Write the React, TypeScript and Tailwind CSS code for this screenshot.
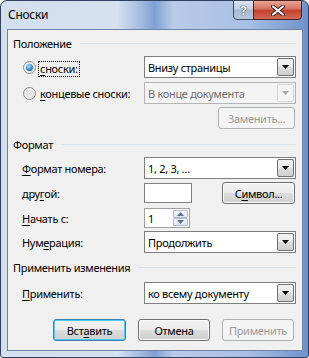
import React from "react";

const FONT = { fontFamily: '"Noto Sans", "Open Sans", sans-serif' };

function M({ children }: { children: React.ReactNode }) {
  return <span className="underline underline-offset-[2px] decoration-[1px]">{children}</span>;
}

function Arrow({ color = "#000" }: { color?: string }) {
  return (
    <svg width="7" height="4" viewBox="0 0 7 4">
      <path d="M0 0h7L3.5 4z" fill={color} />
    </svg>
  );
}

function Combo({ text, disabled }: { text: string; disabled?: boolean }) {
  return (
    <div
      className={
        "w-[152px] h-[22px] flex items-stretch p-[1px] border " +
        (disabled ? "border-[#b5b5b5] bg-[#f4f4f4]" : "border-[#7f7f7f] bg-white")
      }
    >
      <div
        className={
          "flex-1 flex items-center pl-[2px] text-[11px] leading-[15px] " +
          (disabled ? "text-[#6d6d6d]" : "text-black")
        }
      >
        {text}
      </div>
      <div
        className={
          "w-[17px] flex items-center justify-center rounded-[2px] border " +
          (disabled
            ? "border-[#d6d6d6] bg-[#f4f4f4]"
            : "border-[#707070] bg-[linear-gradient(#f2f2f2_0%,#ebebeb_50%,#dddddd_50%,#cfcfcf_100%)]")
        }
      >
        <Arrow color={disabled ? "#a9a9a9" : "#000"} />
      </div>
    </div>
  );
}

function Btn({
  children,
  w,
  disabled,
  def,
}: {
  children: React.ReactNode;
  w: string;
  disabled?: boolean;
  def?: boolean;
}) {
  let cls = "";
  if (disabled) cls = "border-[#adb2b5] bg-[#f4f4f4] text-[#9a9a9a]";
  else if (def)
    cls =
      "border-[#3c7fb1] shadow-[inset_0_0_0_1px_#4fc8f3] bg-[linear-gradient(#f2f2f2_0%,#ebebeb_50%,#dddddd_50%,#cfcfcf_100%)] text-black";
  else
    cls =
      "border-[#707070] shadow-[inset_0_0_0_1px_#fbfbfb] bg-[linear-gradient(#f2f2f2_0%,#ebebeb_50%,#dddddd_50%,#cfcfcf_100%)] text-black";
  return (
    <div
      className={
        "h-[22px] flex items-center justify-center rounded-[3px] border text-[11px] leading-[15px] " +
        w +
        " " +
        cls
      }
    >
      {children}
    </div>
  );
}

function Header({ children, mt }: { children: React.ReactNode; mt: string }) {
  return (
    <div className={"flex items-center pl-[5px] pr-[6px] h-[15px] " + mt}>
      <span className="text-[11px] leading-[15px] text-black whitespace-nowrap">{children}</span>
      <div className="flex-1 h-[1px] bg-[#dbe3e8] ml-[8px]" />
    </div>
  );
}

function Row({
  label,
  children,
  mt,
}: {
  label: React.ReactNode;
  children: React.ReactNode;
  mt: string;
}) {
  return (
    <div className={"flex items-center pl-[14px] pr-[6px] " + mt}>
      <div className="flex-1 text-[11px] leading-[15px] text-black">{label}</div>
      {children}
    </div>
  );
}

function Radio({ checked }: { checked?: boolean }) {
  return (
    <span className="w-[13px] h-[13px] rounded-full border border-[#8c8c8c] bg-[radial-gradient(circle_at_50%_50%,#dcdcdc,#f8f8f8)] flex items-center justify-center">
      {checked && (
        <span className="w-[7px] h-[7px] rounded-full bg-[radial-gradient(circle_at_40%_35%,#b8ecff_0%,#2a86c8_55%,#0b4b85_100%)]" />
      )}
    </span>
  );
}

export default function App() {
  return (
    <div style={FONT} className="w-[309px] h-[358px] overflow-hidden tracking-[-0.3px]">
      <div className="relative w-[309px] h-[358px] rounded-t-[7px] rounded-b-[3px] border border-[#2f4260] bg-[linear-gradient(90deg,#d3dfee_0%,#d6e1f0_38%,#9fb8de_46%,#7fa0d4_50%,#b8cbe7_56%,#a9c0e4_80%,#6f92cb_100%)] flex flex-col">
        {/* title bar */}
        <div className="h-[28px] flex items-center pl-[7px] pb-[1px]">
          <span className="text-[12px] leading-[15px] text-black">Сноски</span>
        </div>
        {/* caption buttons */}
        <div className="absolute top-[-1px] left-[232px] flex">
          <div className="w-[21px] h-[20px] rounded-bl-[4px] border border-[#3d4d66] bg-[linear-gradient(#d9e2ee_0%,#c3d0e3_45%,#a7b8d2_50%,#b9c9df_100%)] flex items-center justify-center">
            <span className="text-[13px] font-bold leading-[13px] text-white [text-shadow:0_0_1px_#1c2a40,0_0_1px_#1c2a40]">
              ?
            </span>
          </div>
          <div className="w-[49px] h-[20px] -ml-[1px] rounded-br-[4px] border border-[#4a2323] bg-[linear-gradient(#e8a596_0%,#d6725f_45%,#c2402d_50%,#d26a55_100%)] flex items-center justify-center">
            <svg width="14" height="11" viewBox="0 0 14 11">
              <path d="M2 1.5L12 9.5M12 1.5L2 9.5" stroke="#3b1a1a" strokeWidth="4" strokeLinecap="round" />
              <path d="M2 1.5L12 9.5M12 1.5L2 9.5" stroke="#ffffff" strokeWidth="2.2" strokeLinecap="round" />
            </svg>
          </div>
        </div>
        {/* content panel */}
        <div className="ml-[6px] w-[296px] h-[322px] border border-[#6f84a4] bg-[#f0f0f0] flex flex-col">
          <Header mt="mt-[6px]">Положение</Header>

          <div className="flex items-center pl-[15px] pr-[6px] mt-[5px] h-[22px]">
            <Radio checked />
            <div className="flex-1 ml-[2px]">
              <span className="inline-block border border-dotted border-black px-[1px] text-[11px] leading-[14px] text-black">
                <M>с</M>носки:
              </span>
            </div>
            <Combo text="Внизу страницы" />
          </div>

          <div className="flex items-center pl-[15px] pr-[6px] mt-[4px] h-[22px]">
            <Radio />
            <div className="flex-1 ml-[4px] text-[11px] leading-[15px] text-black">
              <M>к</M>онцевые сноски:
            </div>
            <Combo text="В конце документа" disabled />
          </div>

          <div className="flex justify-end pr-[7px] mt-[3px]">
            <Btn w="w-[77px]" disabled>
              Заменить...
            </Btn>
          </div>

          <Header mt="mt-[8px]">Формат</Header>

          <Row
            mt="mt-[5px]"
            label={
              <>
                <M>Ф</M>ормат номера:
              </>
            }
          >
            <Combo text="1, 2, 3, …" />
          </Row>

          <Row
            mt="mt-[3px]"
            label={
              <>
                дру<M>г</M>ой:
              </>
            }
          >
            <div className="w-[152px] flex items-center justify-between">
              <div className="w-[48px] h-[20px] border border-[#838383] bg-white" />
              <Btn w="w-[73px] mr-[1px]">
                С<M>и</M>мвол...
              </Btn>
            </div>
          </Row>

          <Row
            mt="mt-[4px]"
            label={
              <>
                <M>Н</M>ачать с:
              </>
            }
          >
            <div className="w-[152px] flex">
              <div className="w-[46px] h-[20px] border border-[#a0a0a0] bg-white flex items-stretch p-[1px]">
                <div className="flex-1 flex items-center pl-[2px] text-[11px] leading-[15px] text-black">1</div>
                <div className="w-[15px] flex flex-col">
                  <div className="flex-1 flex items-center justify-center border border-[#b5bccc] rounded-[1px] bg-[linear-gradient(#f4f6fa,#dde3ec)]">
                    <svg width="7" height="4" viewBox="0 0 7 4">
                      <path d="M0 4h7L3.5 0z" fill="#5d6f92" />
                    </svg>
                  </div>
                  <div className="flex-1 flex items-center justify-center border border-[#b5bccc] rounded-[1px] bg-[linear-gradient(#f4f6fa,#dde3ec)]">
                    <svg width="7" height="4" viewBox="0 0 7 4">
                      <path d="M0 0h7L3.5 4z" fill="#5d6f92" />
                    </svg>
                  </div>
                </div>
              </div>
            </div>
          </Row>

          <Row
            mt="mt-[3px]"
            label={
              <>
                Нум<M>е</M>рация:
              </>
            }
          >
            <Combo text="Продолжить" />
          </Row>

          <Header mt="mt-[7px]">Применить изменения</Header>

          <Row
            mt="mt-[7px]"
            label={
              <>
                <M>П</M>рименить:
              </>
            }
          >
            <Combo text="ко всему документу" />
          </Row>

          <div className="flex justify-end gap-[12px] pr-[8px] mt-[15px]">
            <Btn w="w-[73px]" def>
              Вст<M>а</M>вить
            </Btn>
            <Btn w="w-[72px]">Отмена</Btn>
            <Btn w="w-[72px]" disabled>
              Применить
            </Btn>
          </div>
        </div>
      </div>
    </div>
  );
}
